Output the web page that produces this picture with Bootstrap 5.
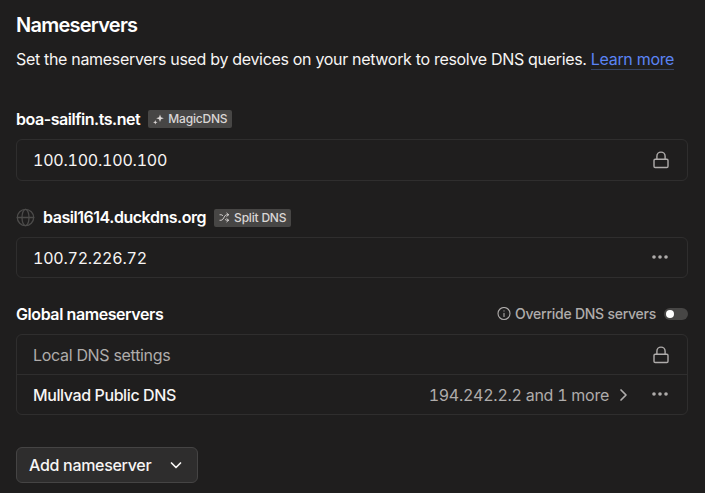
<!DOCTYPE html>
<html lang="en" data-bs-theme="dark">
<head>
<meta charset="utf-8">
<meta name="viewport" content="width=device-width, initial-scale=1">
<title>Nameservers</title>
<link href="https://cdn.jsdelivr.net/npm/bootstrap@5.3.0/dist/css/bootstrap.min.css" rel="stylesheet">
<style>
  body { background: #1f1e1e; color: #f7f5f4; font: 400 16px/24px Inter, sans-serif; letter-spacing: -.318px; overflow: hidden; }
  .page { width: 704px; padding-top: 13px; }
  .title { font-size: 20px; line-height: 25px; letter-spacing: -.76px; margin-bottom: 9px; }
  .section-name { font-size: 16px; line-height: 24px; font-weight: 600; letter-spacing: -.46px; }
  .global-name { letter-spacing: -.42px; }
  .learn { color: #5b84f5; text-decoration: none; border-bottom: 1px solid #37435f; }
  .muted { color: #afacab; }
  .tag { background: #474645; color: #dad6d5; font-size: 12px; line-height: 18px; font-weight: 500; letter-spacing: -.2px; border-radius: 2px; padding: 0 5px; }
  .tag-low { margin-top: 1px; }
  .box { border: 1px solid #2f2e2e; border-radius: 6px; background: transparent; }
  .box-row { height: 39px; padding: 0 16px; background: transparent; border: 0; color: inherit; }
  .box-row.first-row { height: 40px; }
  .box-row + .box-row { height: 40px; border-top: 1px solid #2f2e2e; }
  .ip { font-variant-numeric: tabular-nums; letter-spacing: -.22px; }
  .ip-more { letter-spacing: -.26px; }
  .override { font-size: 14px; font-weight: 500; letter-spacing: -.25px; }
  .toggle { width: 24px; height: 12px; border-radius: 6px; background: #474645; padding: 2px; }
  .toggle span { width: 8px; height: 8px; border-radius: 50%; background: #fff; }
  .add { width: 182px; height: 36px; border: 1px solid #454444; border-radius: 6px; background: #2e2d2d; color: #f7f5f4; font-size: 16px; font-weight: 500; letter-spacing: -.3px; padding: 0 12px; margin-top: 32px; }
  .tight { letter-spacing: -.4px; }
  .chev { margin: 0 19px 0 6px; }
  svg { display: block; flex: none; }
  .stroke { fill: none; stroke: currentColor; stroke-linecap: round; stroke-linejoin: round; }
  .g1 { margin-top: 36px; } .g2 { margin-top: 24px; } .g3 { margin-top: 24px; }
</style>
</head>
<body>
<main class="page px-3">
  <h1 class="title fw-semibold">Nameservers</h1>
  <p class="mb-0">Set the nameservers used by devices on your network to resolve DNS queries. <a class="learn" href="#">Learn more</a></p>

  <section class="g1">
    <div class="d-flex align-items-center gap-2 mb-2">
      <h2 class="section-name mb-0">boa-sailfin.ts.net</h2>
      <span class="tag d-flex align-items-center">
        <svg width="11" height="11" viewBox="0 0 11 11" fill="currentColor"><path d="M7 .4 8 3.2 10.8 4.2 8 5.2 7 8 6 5.2 3.2 4.2 6 3.2Z"/><path d="M2.3 6.1 2.9 7.7 4.5 8.3 2.9 8.9 2.3 10.5 1.7 8.9.1 8.3 1.7 7.7Z"/></svg>
        <span class="ms-1">MagicDNS</span>
      </span>
    </div>
    <div class="box"><div class="box-row first-row d-flex align-items-center justify-content-between">
      <span class="ip">100.100.100.100</span>
      <svg class="stroke muted" width="20" height="20" viewBox="0 0 20 20" stroke-width="1.4"><rect x="3" y="9.2" width="14" height="8.3" rx="1.2"/><path d="M5.9 9V6.2a4.1 4.1 0 0 1 8.2 0V9"/></svg>
    </div></div>
  </section>

  <section class="g2">
    <div class="d-flex align-items-center gap-2 mb-2">
      <svg class="stroke" width="19" height="19" viewBox="0 0 19 19" color="#4c4b4a" stroke-width="1.3"><circle cx="9.5" cy="9.5" r="8.2"/><ellipse cx="9.5" cy="9.5" rx="3.5" ry="8.2"/><path d="M1.3 9.5h16.4"/></svg>
      <h2 class="section-name mb-0">basil1614.duckdns.org</h2>
      <span class="tag tag-low d-flex align-items-center">
        <svg class="stroke" width="11" height="11" viewBox="0 0 24 24" stroke-width="2"><path d="M17 2.500 21 6l-4 3.500M17 14.500l4 3.500-4 3.500M2 18h2.500c2 0 3.200-1 4.200-2.600L13 8.600C14 7 15.200 6 17 6h4M2 6h2.500c1.500 0 2.700.6 3.600 1.700M13.500 16.200c.9 1.200 2 1.800 3.500 1.800h4"/></svg>
        <span class="ms-1">Split DNS</span>
      </span>
    </div>
    <div class="box"><div class="box-row d-flex align-items-center justify-content-between">
      <span class="ip">100.72.226.72</span>
      <svg class="muted" width="20" height="20" viewBox="0 0 20 20" fill="currentColor"><circle cx="3" cy="9" r="1.8"/><circle cx="9" cy="9" r="1.8"/><circle cx="15" cy="9" r="1.8"/></svg>
    </div></div>
  </section>

  <section class="g3">
    <div class="d-flex align-items-center justify-content-between mb-2">
      <h2 class="section-name global-name mb-0">Global nameservers</h2>
      <div class="d-flex align-items-center muted override">
        <svg class="stroke" width="14" height="14" viewBox="0 0 14 14" stroke-width="1.1"><circle cx="7" cy="6.500" r="6"/><path d="M7 6.200V9.500M7 3.900v.1"/></svg>
        <span class="ms-1 me-2">Override DNS servers</span>
        <span class="toggle d-flex" role="switch" aria-checked="false"><span></span></span>
      </div>
    </div>
    <div class="box">
      <div class="box-row d-flex align-items-center justify-content-between">
        <span class="muted">Local DNS settings</span>
        <svg class="stroke muted" width="20" height="20" viewBox="0 0 20 20" stroke-width="1.4"><rect x="3" y="9.2" width="14" height="8.3" rx="1.2"/><path d="M5.9 9V6.2a4.1 4.1 0 0 1 8.2 0V9"/></svg>
      </div>
      <div class="box-row d-flex align-items-center">
        <span class="fw-medium tight">Mullvad Public DNS</span>
        <span class="muted ms-auto ip ip-more">194.242.2.2 and 1 more</span>
        <svg class="stroke muted chev" width="17" height="18" viewBox="0 0 17 18" stroke-width="1.7"><path d="m6 4 5 5-5 5"/></svg>
        <svg class="muted" width="20" height="20" viewBox="0 0 20 20" fill="currentColor"><circle cx="3" cy="9" r="1.8"/><circle cx="9" cy="9" r="1.8"/><circle cx="15" cy="9" r="1.8"/></svg>
      </div>
    </div>
  </section>

  <button class="add d-flex align-items-center justify-content-between" type="button">
    <span>Add nameserver</span>
    <svg class="stroke" width="18" height="18" viewBox="0 0 18 18" stroke-width="1.7"><path d="m4.5 7 4.5 4.5L13.500 7"/></svg>
  </button>
</main>
<script src="https://cdn.jsdelivr.net/npm/bootstrap@5.3.0/dist/js/bootstrap.bundle.min.js"></script>
</body>
</html>
